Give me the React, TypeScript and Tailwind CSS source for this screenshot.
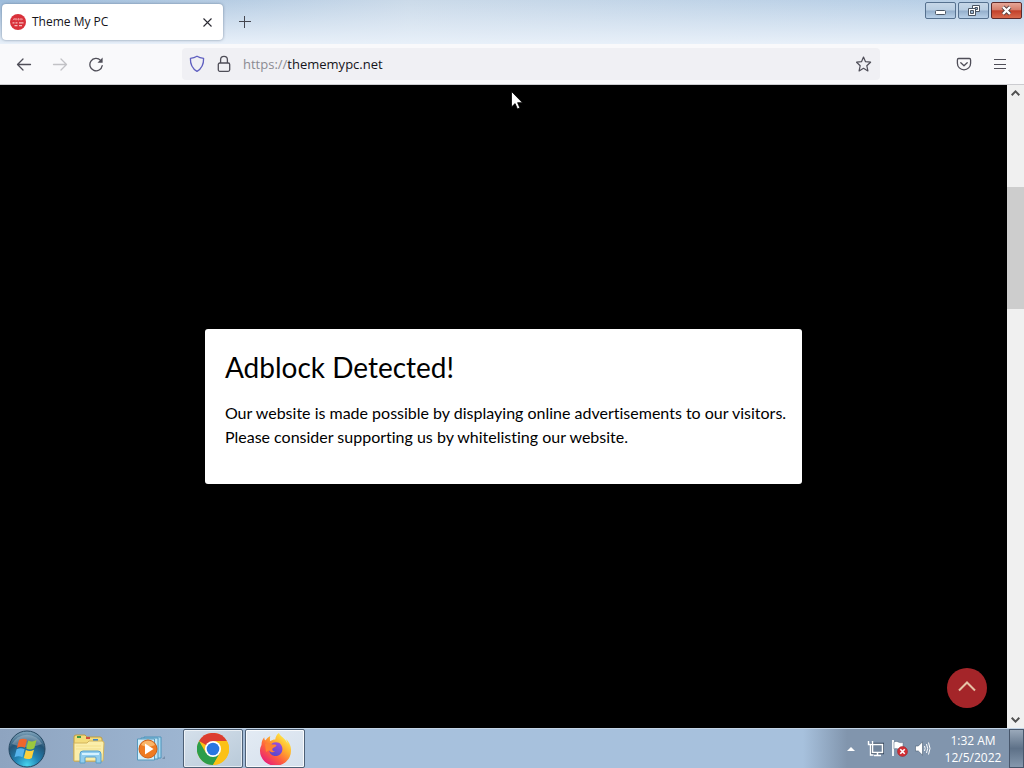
import { useState } from 'react'
import type { ReactNode } from 'react'

function IconButton({ label, className = '', children }: { label: string; className?: string; children: ReactNode }) {
  return (
    <button type="button" aria-label={label} className={`flex shrink-0 items-center justify-center ${className}`}>
      {children}
    </button>
  )
}

function SiteIcon() {
  return (
    <svg width="16" height="16" viewBox="0 0 16 16">
      <circle cx="8" cy="8" r="8" fill="#d9313a" />
      <path d="M3 5.2h10M3 6.2l2-2M6 4v2.4M8.5 4v2.4M11 4v2.4" stroke="#ee8f92" strokeWidth="1" fill="none" />
      <path d="M2.5 8.8h2M5.5 8.8h2M9 8.8h4.5M4.5 11.6h3M9 11.6h3" stroke="#f5bcbc" strokeWidth="1.2" fill="none" />
    </svg>
  )
}

function TitleBar() {
  return (
    <header className="h-11 shrink-0 bg-linear-to-r from-[#98b9da] via-[#c8d8e8] via-40% to-[#b0cae4]">
      <div className="flex h-full items-start justify-between bg-linear-to-b from-white/5 to-[#e8f0f9]">
        <div className="flex items-center pt-1 pl-0.5">
          <div className="flex h-9 w-[221px] items-center gap-1.5 rounded bg-white px-2 shadow-[0_0_3px_rgba(60,80,110,0.6)]">
            <SiteIcon />
            <span className="flex-1 text-[12px] text-[#15141a]">Theme My PC</span>
            <IconButton label="Close tab" className="h-4 w-4">
              <svg width="9" height="9" viewBox="0 0 9 9" stroke="#2b2a33" strokeWidth="1.1">
                <path d="M.5.5l8 8M8.5.5l-8 8" />
              </svg>
            </IconButton>
          </div>
          <IconButton label="New tab" className="ml-3 h-5 w-5">
            <svg width="12" height="12" viewBox="0 0 12 12" stroke="#45464f">
              <path d="M5.5 0v12M0 5.5h12" />
            </svg>
          </IconButton>
        </div>
        <div className="flex gap-0.5 pt-0.5 pr-0.5">
          <IconButton
            label="Minimize"
            className="h-[17px] w-[31px] rounded-xs border border-[#56718f] bg-[linear-gradient(#c6d7e8_0%,#b8cde2_48%,#93aecb_52%,#b8d0e8_100%)]"
          >
            <svg width="11" height="5" viewBox="0 0 11 5" className="mt-1">
              <rect x=".5" y=".5" width="10" height="4" rx="1" fill="#fff" stroke="#4a5563" />
            </svg>
          </IconButton>
          <IconButton
            label="Restore"
            className="h-[17px] w-[31px] rounded-xs border border-[#56718f] bg-[linear-gradient(#c6d7e8_0%,#b8cde2_48%,#93aecb_52%,#b8d0e8_100%)]"
          >
            <svg width="12" height="11" viewBox="0 0 12 11" fill="none">
              <path d="M4.500.5h7v6h-7z" fill="#fff" stroke="#4a5563" />
              <path d="M7 2.500h2.500v2H7z" stroke="#4a5563" fill="#9bb6d3" />
              <path d="M.5 3.500h7v7h-7z" fill="#fff" stroke="#4a5563" />
              <path d="M2.500 5.500h3v3h-3z" stroke="#4a5563" fill="#9bb6d3" />
            </svg>
          </IconButton>
          <IconButton
            label="Close"
            className="h-[17px] w-[31px] rounded-xs border border-[#5e2a2a] bg-[linear-gradient(#e6a797_0%,#d57f6c_45%,#c2402a_52%,#d8694c_100%)]"
          >
            <svg width="13" height="11" viewBox="0 0 13 11">
              <path d="M3 2l7 7M10 2l-7 7" stroke="#54403f" strokeWidth="4" />
              <path d="M3 2l7 7M10 2l-7 7" stroke="#fff" strokeWidth="2.4" />
            </svg>
          </IconButton>
        </div>
      </div>
    </header>
  )
}

function Toolbar() {
  const [url, setUrl] = useState('thememypc.net')

  return (
    <nav className="flex h-[41px] shrink-0 items-center justify-between border-b border-[#ccccd0] bg-[#f9f9fb]">
      <div className="flex w-[182px] shrink-0 gap-1 pl-2">
        <IconButton label="Back" className="h-8 w-8">
          <svg width="16" height="16" viewBox="0 0 16 16" fill="none" stroke="#4f4e58" strokeWidth="1.3" strokeLinecap="round" strokeLinejoin="round">
            <path d="M14.500 8.500H1.500M7 3L1.500 8.500 7 14" />
          </svg>
        </IconButton>
        <IconButton label="Forward" className="h-8 w-8">
          <svg width="16" height="16" viewBox="0 0 16 16" fill="none" stroke="#c2c2c6" strokeWidth="1.3" strokeLinecap="round" strokeLinejoin="round">
            <path d="M1.500 8.500h13M9 3l5.500 5.500L9 14" />
          </svg>
        </IconButton>
        <IconButton label="Reload" className="h-8 w-8">
          <svg width="16" height="16" viewBox="0 0 16 16" fill="none" stroke="#4f4e58" strokeWidth="1.3" strokeLinecap="round">
            <path d="M12.6 4.4A6.2 6.2 0 1 0 14.2 9.600" />
            <path d="M14.600 1.600v5.100H9.500z" fill="#4f4e58" stroke="none" />
          </svg>
        </IconButton>
      </div>
      <div className="flex h-8 flex-1 items-center rounded bg-[#f0f0f4] pl-[7px]">
        <svg width="16" height="18" viewBox="0 0 16 18" fill="none" stroke="#5f5fc0" strokeWidth="1.3" strokeLinejoin="round">
          <path d="M8 1.2c2 1.300 4 1.900 6.600 2.100.2 6-1.600 10.200-6.600 13.100C3 13.500 1.200 9.300 1.400 3.300 4 3.100 6 2.500 8 1.200z" />
        </svg>
        <svg width="14" height="18" viewBox="0 0 14 18" className="ml-3" fill="none" stroke="#4f4e58" strokeWidth="1.3">
          <rect x="1.300" y="8" width="11.400" height="8.300" rx="1.500" />
          <path d="M3.600 8V4.800a3.400 3.400 0 0 1 6.800 0V8" />
        </svg>
        <label htmlFor="url" className="ml-3 pt-0.5 text-[13px] text-[#8b8b92]">
          https://
        </label>
        <input
          id="url"
          value={url}
          onChange={(e) => setUrl(e.target.value)}
          className="min-w-0 flex-1 bg-transparent pt-0.5 text-[13px] text-[#15141a] outline-none"
        />
        <IconButton label="Bookmark this page" className="h-8 w-8">
          <svg width="16" height="16" viewBox="0 0 16 16" fill="none" stroke="#4f4e58" strokeWidth="1.2" strokeLinejoin="round">
            <path d="M7.500 1l2 4.700 5.100.5-3.800 3.500 1.100 5.200-4.400-2.600-4.400 2.600 1.100-5.200L.6 6.200l4.900-.5z" />
          </svg>
        </IconButton>
      </div>
      <div className="flex w-[144px] shrink-0 justify-end gap-1 pr-2">
        <IconButton label="Save to Pocket" className="h-8 w-8">
          <svg width="16" height="16" viewBox="0 0 16 16" fill="none" stroke="#4f4e58" strokeWidth="1.3" strokeLinecap="round" strokeLinejoin="round">
            <path d="M2.600 2.500h10.800c.8 0 1.200.6 1.200 1.400v3.300a6.600 6.600 0 0 1-13.200 0V3.900c0-.8.4-1.400 1.200-1.400z" />
            <path d="M4.800 6.700L8 9.700l3.200-3" />
          </svg>
        </IconButton>
        <IconButton label="Menu" className="h-8 w-8">
          <svg width="12" height="11" viewBox="0 0 12 11" stroke="#4f4e58">
            <path d="M0 .5h12M0 5.500h12M0 9.500h12" />
          </svg>
        </IconButton>
      </div>
    </nav>
  )
}

function ScrollBar() {
  return (
    <div className="flex w-[17px] shrink-0 flex-col items-center bg-[#f0f0f0]">
      <IconButton label="Scroll up" className="h-4 w-full">
        <svg width="9" height="6" viewBox="0 0 9 6" fill="none" stroke="#505050" strokeWidth="2">
          <path d="M.7 5.200L4.500 1.400l3.800 3.800" />
        </svg>
      </IconButton>
      <div className="flex w-full flex-1 flex-col">
        <div className="flex-14" />
        <div className="flex-20 bg-[#cdcdcd]" />
        <div className="flex-66" />
      </div>
      <IconButton label="Scroll down" className="h-4 w-full">
        <svg width="9" height="6" viewBox="0 0 9 6" fill="none" stroke="#505050" strokeWidth="2">
          <path d="M.7.8l3.800 3.800L8.300.8" />
        </svg>
      </IconButton>
    </div>
  )
}

function Page() {
  return (
    <main className="relative flex flex-1 items-center justify-center bg-black font-[Lato,sans-serif] [font-variant-ligatures:none]">
      <section className="rounded-[3px] bg-white pt-5 pr-4 pb-[35px] pl-5 text-black">
        <h1 className="text-[28px] leading-9">Adblock Detected!</h1>
        <p className="mt-4 text-[16px] leading-6">
          Our website is made possible by displaying online advertisements to our visitors.
          <br />
          Please consider supporting us by whitelisting our website.
        </p>
      </section>
      <IconButton label="Back to top" className="absolute right-5 bottom-5 h-10 w-10 rounded-full bg-[#a42529] pb-1">
        <svg width="18" height="11" viewBox="0 0 18 11" fill="none" stroke="#e6c3a6" strokeWidth="2">
          <path d="M1 9.500l8-8 8 8" />
        </svg>
      </IconButton>
      {/* mouse pointer */}
      <svg width="12" height="19" viewBox="0 0 12 19" className="absolute top-1.5 left-[511px]">
        <path d="M.5.5v15.500l3.600-3.400 2.300 5.400 2.500-1.100-2.300-5.200h4.900z" fill="#fff" stroke="#000" strokeWidth=".8" />
      </svg>
    </main>
  )
}

function StartOrb() {
  return (
    <svg width="38" height="38" viewBox="0 0 38 38">
      <defs>
        <radialGradient id="orb" cx=".5" cy=".95" r=".95">
          <stop offset="0" stopColor="#48d5ee" />
          <stop offset=".35" stopColor="#2183b4" />
          <stop offset=".7" stopColor="#245476" />
          <stop offset="1" stopColor="#86aac1" />
        </radialGradient>
      </defs>
      <circle cx="19" cy="19" r="18" fill="url(#orb)" stroke="#254761" />
      <path d="M4 14a16 14 0 0 1 30 0c-10 4-20 4-30 0z" fill="#fff" opacity=".25" />
      <path d="M11 10c2.800-1.800 5.400-1.500 8-.2l-2.100 8c-2.600-1.300-5.200-1.400-8 .1z" fill="#f0662d" />
      <path d="M20.300 10.500c2.700 1.300 5.300 1.200 8.200-.4l-2.200 8.200c-2.800 1.600-5.400 1.600-8.100.2z" fill="#9bc83e" />
      <path d="M8.600 19.300c2.800-1.500 5.400-1.400 8-.1l-2.100 8c-2.600-1.300-5.200-1.400-8 .1z" fill="#56b4ec" />
      <path d="M17.900 20c2.700 1.300 5.300 1.200 8.100-.3l-2.200 8.200c-2.800 1.600-5.300 1.500-8 .1z" fill="#fcd03b" />
    </svg>
  )
}

function ExplorerIcon() {
  return (
    <svg width="34" height="30" viewBox="0 0 34 30">
      <path d="M2 3q0-2 2-2h9l2 2h13q2 0 2 2v22H2z" fill="#f3dc7c" stroke="#bf9c42" />
      <path d="M5 2h4v2H5z" fill="#3d9a47" />
      <path d="M14 3h4v2h-4z" fill="#d34f3b" />
      <path d="M21 5h5v2h-5z" fill="#3d86cd" />
      <path d="M2 9h13l2-2h13q2 0 2 2l-1 18H2z" fill="#fbeeaa" stroke="#d2b45c" />
      <path d="M4 12h25M4 15h25" stroke="#f3df8c" />
      <path d="M8 29V20q0-3 3-3h15q3 0 3 3v9h-5v-5q0-1-1-1h-9q-1 0-1 1v5z" fill="#91cdee" stroke="#579ec9" />
      <path d="M10 20h17" stroke="#d6f2ff" strokeWidth="2" />
    </svg>
  )
}

function MediaPlayerIcon() {
  return (
    <svg width="30" height="26" viewBox="0 0 30 26">
      <path d="M8 1h17v21H8z" fill="#a9dbf1" stroke="#4d94bc" />
      <path d="M5 2h17v21H5z" fill="#bde4f5" stroke="#4d94bc" />
      <path d="M1.500 3h17v21h-17z" fill="#d4effa" stroke="#5599bd" />
      <path d="M26 23l3-3v3z" fill="#7890ab" />
      <circle cx="12" cy="13" r="9" fill="#ee7b22" stroke="#cd5f17" />
      <path d="M5 9a8 8 0 0 1 14 0q-7 3-14 0z" fill="#f9b568" />
      <path d="M9 7.500v11l8.500-5.500z" fill="#fff" />
    </svg>
  )
}

function ChromeIcon() {
  return (
    <svg width="32" height="32" viewBox="0 0 32 32">
      <circle cx="16" cy="16" r="16" fill="#fbc116" />
      <path d="M16 16L2.100 8A16 16 0 0 1 29.900 8z" fill="#dc3d31" />
      <path d="M2.100 8A16 16 0 0 0 16 32l7-12.100L16 16 9 19.900z" fill="#2c9d4b" />
      <path d="M16 8h13.900A16 16 0 0 1 16 32l7-12.100z" fill="#fbc116" />
      <circle cx="16" cy="16" r="8" fill="#fff" />
      <circle cx="16" cy="16" r="6.300" fill="#2876e0" />
    </svg>
  )
}

function FirefoxIcon() {
  return (
    <svg width="31" height="32" viewBox="0 0 31 32">
      <defs>
        <linearGradient id="fox" x1=".85" y1=".1" x2=".2" y2=".9">
          <stop offset="0" stopColor="#fff04b" />
          <stop offset=".35" stopColor="#ffae2d" />
          <stop offset=".65" stopColor="#ff623d" />
          <stop offset="1" stopColor="#ea2474" />
        </linearGradient>
        <linearGradient id="globe" x1=".7" y1="0" x2=".3" y2="1">
          <stop offset="0" stopColor="#9b4ee0" />
          <stop offset="1" stopColor="#5547c9" />
        </linearGradient>
      </defs>
      <path
        d="M30 12c-.8-2.300-2.400-4.500-4-5.700 1 2 1.500 3.500 1.600 4.500C25 4.500 20.500 4 18.900 0c-2.300 1.500-3.500 4-3.600 6.500-2 0-3.600.7-5 1.700-.6-1.700-.5-3.500 0-5.300C8 4 6.600 5.600 5.500 7.300 4.500 6.800 4.200 5.300 4.300 4.300 2.300 6.300 1.600 9.200 1.500 12 .5 13.800 0 16 0 17.500A15 14.500 0 0 0 31 18c.1-2.200-.2-4.200-1-6z"
        fill="url(#fox)"
      />
      <path d="M12 10.500c3-2 7-1.500 9 1.200 2.700 3.700 1.500 9-2.700 10.800-4.300 1.700-8.500-.7-9-4.700-.3-3 .7-5.800 2.700-7.300z" fill="url(#globe)" />
      <path d="M5 11c2.500-1.500 5-1.300 7 .6 2-.2 4.300-.2 4.500.9 0 1.300-3 1.800-4 2.900-.7 1.600.2 2.900 2.600 2.900-1.500 1.700-5 1.200-6.100-1L6 19z" fill="#ff8233" />
    </svg>
  )
}

function Tray() {
  return (
    <div className="flex h-full items-center bg-linear-to-r from-transparent to-[#8195ad] to-20% pl-9">
      <IconButton label="Show hidden icons" className="h-8 w-6">
        <svg width="8" height="4" viewBox="0 0 8 4">
          <path d="M0 4l4-4 4 4z" fill="#fff" />
        </svg>
      </IconButton>
      <IconButton label="Network" className="h-8 w-6">
        <svg width="17" height="16" viewBox="0 0 17 16" fill="none">
          <path d="M5.500 3.500h10v8h-10z" stroke="#34465b" strokeWidth="3.500" />
          <path d="M5.500 3.500h10v8h-10z" fill="#71849b" stroke="#fff" strokeWidth="1.500" />
          <path d="M7 14.500h7M10.500 12v2" stroke="#fff" strokeWidth="1.500" />
          <path d="M1.500 0v3.500h4V0M3.500 3v11h3" stroke="#fff" strokeWidth="1.400" />
        </svg>
      </IconButton>
      <IconButton label="Action Center" className="h-8 w-6">
        <svg width="17" height="17" viewBox="0 0 17 17">
          <path d="M2 0v16" stroke="#fff" strokeWidth="1.800" />
          <path d="M3 2c4-2 5 2 9 .3v7C8.500 11 7 7.500 3 9z" fill="#fff" stroke="#53647a" strokeWidth=".5" />
          <circle cx="11.500" cy="11.500" r="5" fill="#d22e34" stroke="#922127" strokeWidth=".5" />
          <path d="M9.300 9.300l4.400 4.400M13.700 9.300l-4.400 4.400" stroke="#fff" strokeWidth="1.600" />
        </svg>
      </IconButton>
      <IconButton label="Volume" className="h-8 w-6">
        <svg width="16" height="15" viewBox="0 0 16 15" fill="none">
          <path d="M.5 5h2.800L7.500.8v13.400L3.300 10H.5z" fill="#fff" stroke="#4c5e74" strokeWidth=".6" />
          <path d="M9.500 5q1.300 2.500 0 5M11.500 3q2.300 4.500 0 9M13.500 1.500q3 6 0 12" stroke="#fff" strokeWidth="1" />
        </svg>
      </IconButton>
      <time className="ml-2 w-15 text-center text-[12px] leading-[17px] text-white">
        1:32 AM
        <br />
        12/5/2022
      </time>
      <button
        type="button"
        aria-label="Show desktop"
        className="ml-1.5 h-full w-[15px] border border-[#47566b] bg-linear-to-b from-[#9aa9ba] via-[#5e7188] to-[#8598ad]"
      />
    </div>
  )
}

function Taskbar() {
  return (
    <footer className="flex h-10 shrink-0 items-center justify-between border-t border-[#c3d4e6] bg-linear-to-r from-[#8ea4c0] via-[#a7c1dd] via-30% to-[#a7c1dd]">
      <div className="flex h-full items-center">
        <IconButton label="Start" className="h-full w-[54px]">
          <StartOrb />
        </IconButton>
        <IconButton label="Windows Explorer" className="ml-1 h-full w-[62px]">
          <ExplorerIcon />
        </IconButton>
        <IconButton label="Windows Media Player" className="h-full w-[62px]">
          <MediaPlayerIcon />
        </IconButton>
        <IconButton
          label="Google Chrome"
          className="ml-px h-full w-[60px] rounded-xs border border-[#4d6076] bg-linear-to-br from-[#d5e0eb] to-[#b9cad9] inset-ring inset-ring-white/60"
        >
          <ChromeIcon />
        </IconButton>
        <IconButton
          label="Firefox"
          className="ml-0.5 h-full w-[60px] rounded-xs border border-[#4d6076] bg-linear-to-br from-[#e3ebf4] to-[#d5e0ec] inset-ring inset-ring-white/80"
        >
          <FirefoxIcon />
        </IconButton>
      </div>
      <Tray />
    </footer>
  )
}

export default function App() {
  return (
    <div className="flex h-screen flex-col overflow-hidden font-['Open_Sans','Noto_Sans',sans-serif]">
      <TitleBar />
      <Toolbar />
      <div className="flex min-h-0 flex-1">
        <Page />
        <ScrollBar />
      </div>
      <Taskbar />
    </div>
  )
}
